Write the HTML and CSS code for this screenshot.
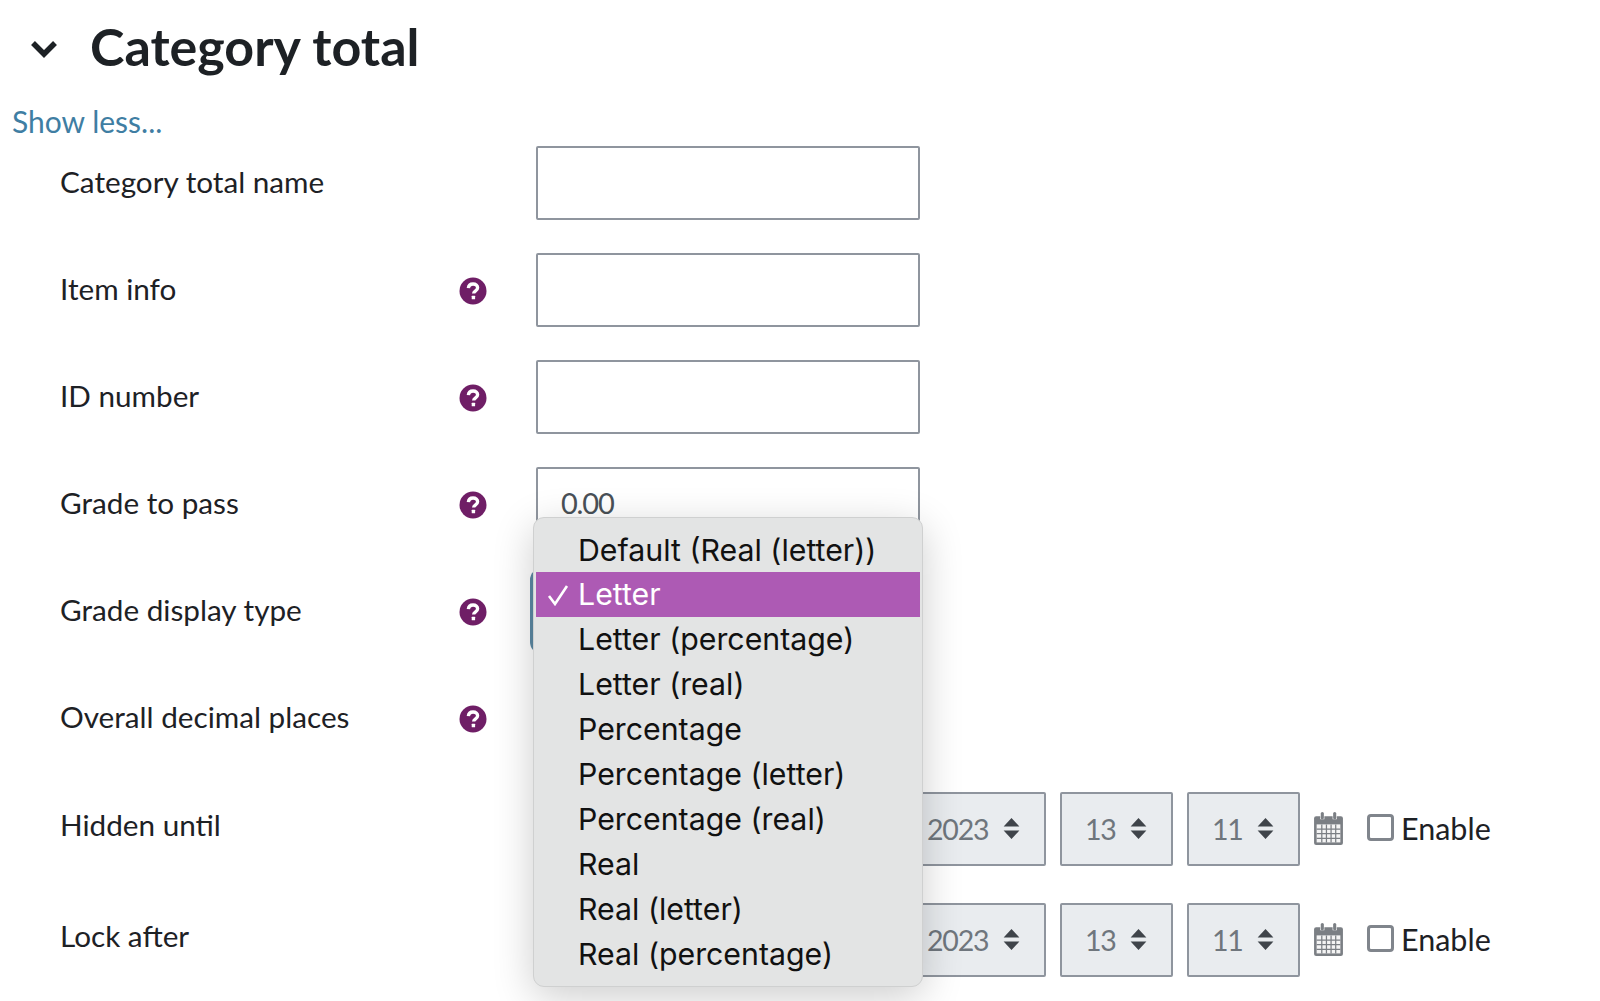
FILE: index.html
```html
<!DOCTYPE html>
<html lang="en">
<head>
    <meta charset="UTF-8">
    <meta name="viewport" content="width=device-width, initial-scale=1.0">
    <title>Category total</title>
    <link rel="stylesheet" href="styles.css">
</head>
<body>
    <svg class="svg-defs" width="0" height="0">
        <symbol id="help" viewBox="0 0 28 28">
            <circle cx="14" cy="14" r="13.5" fill="#6f1e66"/>
            <path d="M9.4 11.200c.2-2.800 2.100-4.200 4.700-4.200 2.600 0 4.500 1.500 4.500 3.700 0 1.700-1 2.500-2.300 3.400-1 .7-1.600 1.200-1.600 2.500" fill="none" stroke="#fff" stroke-width="3.400"/>
            <rect x="12.700" y="18.800" width="3.400" height="3.400" rx=".5" fill="#fff"/>
        </symbol>
        <symbol id="updown" viewBox="0 0 16 20">
            <path d="M8 0l7.500 8H.5zM8 20L.5 12h15z" fill="#3f444a"/>
        </symbol>
        <symbol id="calendar" viewBox="0 0 28 32">
            <path d="M2 4h4v3h4V4h8v3h4V4h4a2 2 0 0 1 2 2v24a2 2 0 0 1-2 2H2a2 2 0 0 1-2-2V6a2 2 0 0 1 2-2z" fill="#7b7f84"/>
            <rect x="6.500" y="0" width="3" height="7" rx="1.500" fill="#7b7f84"/>
            <rect x="18.500" y="0" width="3" height="7" rx="1.500" fill="#7b7f84"/>
            <path d="M2.500 12h23v17.500h-23z" fill="#f4f4f4"/>
            <path d="M2.500 16.500h23M2.500 21h23M2.500 25.500h23M7.500 12v17.500M12 12v17.500M16.500 12v17.500M21 12v17.500" stroke="#7b7f84" stroke-width="1.200" fill="none"/>
        </symbol>
    </svg>

    <div class="page">
        <div class="section-header">
            <svg class="chevron" viewBox="0 0 28 18"><path d="M3 3l11 11L25 3" fill="none" stroke="#1d2125" stroke-width="5.500"/></svg>
            <h2>Category total</h2>
        </div>
        <a class="show-less" href="#">Show less...</a>

        <div class="form-row">
            <label class="row-label">Category total name</label>
            <span class="row-help"></span>
            <input class="text-input" type="text">
        </div>
        <div class="form-row">
            <label class="row-label">Item info</label>
            <span class="row-help"><svg class="help-icon"><use href="#help"/></svg></span>
            <input class="text-input" type="text">
        </div>
        <div class="form-row">
            <label class="row-label">ID number</label>
            <span class="row-help"><svg class="help-icon"><use href="#help"/></svg></span>
            <input class="text-input" type="text">
        </div>
        <div class="form-row">
            <label class="row-label">Grade to pass</label>
            <span class="row-help"><svg class="help-icon"><use href="#help"/></svg></span>
            <input class="text-input" type="text" value="0.00">
        </div>
        <div class="form-row">
            <label class="row-label">Grade display type</label>
            <span class="row-help"><svg class="help-icon"><use href="#help"/></svg></span>
            <div class="select-box focused"></div>
        </div>
        <div class="form-row">
            <label class="row-label">Overall decimal places</label>
            <span class="row-help"><svg class="help-icon"><use href="#help"/></svg></span>
            <div class="select-box"></div>
        </div>
        <div class="form-row date-row">
            <label class="row-label">Hidden until</label>
            <span class="row-help"></span>
            <div class="date-controls">
                <div class="date-select wide"></div>
                <div class="date-select wide"></div>
                <div class="date-select year"><span>2023</span><svg class="updown"><use href="#updown"/></svg></div>
                <div class="date-select"><span>13</span><svg class="updown"><use href="#updown"/></svg></div>
                <div class="date-select"><span>11</span><svg class="updown"><use href="#updown"/></svg></div>
                <svg class="calendar"><use href="#calendar"/></svg>
                <label class="enable"><span class="checkbox"></span>Enable</label>
            </div>
        </div>
        <div class="form-row date-row">
            <label class="row-label">Lock after</label>
            <span class="row-help"></span>
            <div class="date-controls">
                <div class="date-select wide"></div>
                <div class="date-select wide"></div>
                <div class="date-select year"><span>2023</span><svg class="updown"><use href="#updown"/></svg></div>
                <div class="date-select"><span>13</span><svg class="updown"><use href="#updown"/></svg></div>
                <div class="date-select"><span>11</span><svg class="updown"><use href="#updown"/></svg></div>
                <svg class="calendar"><use href="#calendar"/></svg>
                <label class="enable"><span class="checkbox"></span>Enable</label>
            </div>
        </div>
    </div>

    <ul class="dropdown">
        <li>Default (Real (letter))</li>
        <li class="selected"><svg class="check" viewBox="0 0 22 22"><path d="M2 12l6 8L20 2" fill="none" stroke="#fff" stroke-width="2.600"/></svg>Letter</li>
        <li>Letter (percentage)</li>
        <li>Letter (real)</li>
        <li>Percentage</li>
        <li>Percentage (letter)</li>
        <li>Percentage (real)</li>
        <li>Real</li>
        <li>Real (letter)</li>
        <li>Real (percentage)</li>
    </ul>
</body>
</html>
```

FILE: styles.css
```css
html, body {
    margin: 0;
    padding: 0;
    background: #fff;
    overflow: hidden;
}
body {
    font-family: "Lato", "Open Sans", sans-serif;
    color: #1d2125;
    height: 1001px;
    position: relative;
}
.svg-defs {
    position: absolute;
}
.page {
    padding: 14px 0 0 12px;
}
.section-header {
    display: flex;
    align-items: center;
    height: 64px;
    padding-left: 18px;
}
.chevron {
    width: 28px;
    height: 18px;
    margin-top: 6px;
}
.section-header h2 {
    margin: 0 0 0 32px;
    font-size: 52px;
    font-weight: 700;
    line-height: 64px;
}
.show-less {
    display: block;
    height: 68px;
    padding-top: 22px;
    box-sizing: border-box;
    line-height: 42px;
    font-size: 30px;
    color: #3f7ea3;
    text-decoration: none;
}
.form-row {
    display: flex;
    align-items: flex-start;
    height: 74px;
    margin-bottom: 33.1px;
}
.date-row {
    height: 78.1px;
}
.row-label {
    box-sizing: border-box;
    width: 447px;
    padding-left: 48px;
    line-height: 72px;
    font-size: 29.7px;
    white-space: nowrap;
}
.row-help {
    width: 77px;
    height: 74px;
    display: flex;
    align-items: center;
}
.help-icon {
    width: 28px;
    height: 28px;
    margin-top: 1px;
}
.text-input {
    box-sizing: border-box;
    width: 384px;
    height: 74px;
    padding: 0 23px 4px;
    border: 2px solid #8f959e;
    border-radius: 2px;
    font: inherit;
    font-size: 29px;
    letter-spacing: -1.2px;
    color: #495057;
    background: #fff;
}
.select-box {
    box-sizing: border-box;
    width: 350px;
    height: 74px;
    border: 2px solid #8f959e;
    border-radius: 2px;
    background: #e9ecef;
}
.select-box.focused {
    border-color: #5b8fae;
    box-shadow: 0 0 0 6px #5d8aa5;
    border-radius: 6px;
}
.date-controls {
    display: flex;
    align-items: center;
    gap: 14px;
    margin-top: 3px;
}
.date-select {
    box-sizing: border-box;
    width: 113px;
    height: 74px;
    padding: 0 24px 0 23px;
    display: flex;
    align-items: center;
    justify-content: space-between;
    border: 2px solid #8f959e;
    border-radius: 2px;
    background: #e9ecef;
    font-size: 28.5px;
    letter-spacing: -1.2px;
    color: #6f767d;
}
.date-select.wide {
    width: 171px;
}
.date-select.year {
    width: 140px;
    padding-left: 19px;
}
.updown {
    width: 17px;
    height: 21px;
    flex-shrink: 0;
}
.calendar {
    width: 29px;
    height: 33px;
}
.enable {
    display: flex;
    align-items: center;
    font-size: 30.5px;
    line-height: 34px;
    margin: -2px 0 0 10px;
}
.checkbox {
    box-sizing: border-box;
    width: 27px;
    height: 27px;
    margin-right: 7px;
    border: 3.5px solid #80858c;
    border-radius: 4px;
    background: #fff;
}
.dropdown {
    position: absolute;
    left: 533px;
    top: 517px;
    box-sizing: border-box;
    width: 390px;
    height: 470px;
    margin: 0;
    padding: 9.5px 2px 0;
    list-style: none;
    background: #e3e4e4;
    border: 1px solid #cfd0d0;
    border-radius: 11px;
    box-shadow: 0 10px 40px rgba(0, 0, 0, 0.2);
    font-family: "Inter", "Liberation Sans", sans-serif;
    font-size: 30.3px;
    color: #111;
}
.dropdown li {
    height: 44.9px;
    line-height: 45px;
    padding-left: 42px;
    white-space: nowrap;
}
.dropdown li.selected {
    position: relative;
    background: #ad5ab4;
    color: #fff;
}
.check {
    position: absolute;
    left: 11px;
    top: 12px;
    width: 22px;
    height: 22px;
}
```
